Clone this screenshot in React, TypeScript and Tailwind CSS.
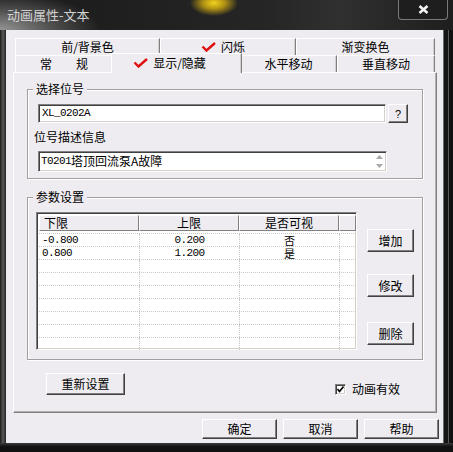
import React from 'react';

const cjk = "font-['Noto_Sans_CJK_SC',sans-serif]";
const mono = "font-['Liberation_Mono',monospace] tracking-[-0.6px]";

function RedCheck() {
  return (
    <svg width="15" height="10" viewBox="0 0 15 10" className="shrink-0">
      <path d="M1.5 4.5 L5.5 8.5 L14 1" stroke="#e00f0f" strokeWidth="2.4" fill="none" />
    </svg>
  );
}

function Btn({ children, className = '' }: { children: React.ReactNode; className?: string }) {
  return (
    <div
      className={`flex items-center justify-center bg-[#eeecf0] border border-t-white border-l-white border-r-[#404040] border-b-[#404040] shadow-[inset_-1px_-1px_0_#808080] text-[12px] leading-[14px] text-black ${cjk} ${className}`}
    >
      {children}
    </div>
  );
}

function Tab({ children, w, className = '' }: { children: React.ReactNode; w: string; className?: string }) {
  return (
    <div
      className={`${w} h-[17px] flex items-center justify-center border-t border-l border-r border-t-white border-l-white border-r-[#808080] shadow-[inset_-1px_0_0_#d0d0d0] text-[12px] leading-[14px] text-black ${cjk} ${className}`}
    >
      {children}
    </div>
  );
}

function Group({ label, className = '', children }: { label: string; className?: string; children: React.ReactNode }) {
  return (
    <div className={`relative border border-[#a0a0a0] shadow-[inset_1px_1px_0_#ffffff,1px_1px_0_#ffffff] ${className}`}>
      <div className={`absolute -top-[8px] left-[5px] px-[3px] bg-[#eeecf0] text-[12px] leading-[14px] text-black ${cjk}`}>{label}</div>
      {children}
    </div>
  );
}

const sunken =
  'border border-t-[#808080] border-l-[#808080] border-b-white border-r-white shadow-[inset_1px_1px_0_#404040,inset_-1px_-1px_0_#d4d0c8] bg-white';

const rows = [
  ['-0.800', '0.200', '否'],
  ['0.800', '1.200', '是'],
  ['', '', ''],
  ['', '', ''],
  ['', '', ''],
  ['', '', ''],
  ['', '', ''],
  ['', '', ''],
  ['', '', ''],
];

export default function App() {
  return (
    <div className="w-[453px] h-[452px] bg-[#0c0c0c] flex flex-col overflow-hidden">
      {/* title bar */}
      <div className="h-[30px] flex items-start justify-between bg-[radial-gradient(24px_13px_at_214px_3px,#f2d21c_0%,#b09214_45%,transparent_100%),radial-gradient(100px_38px_at_0px_30px,#959595_0%,#525252_50%,transparent_100%),linear-gradient(90deg,#1a1a1a,#262626_60%,#303030_75%,#1e1e1e)]">
        <div className={`pl-[7px] pt-[7px] text-[13px] leading-[16px] text-[#d2d2d2] ${cjk}`}>动画属性-文本</div>
        <div className="mr-[5px] w-[50px] h-[20px] border border-t-0 border-[#7a7a7a] rounded-b-[4px] flex items-center justify-center bg-[#1e1e1e]">
          <svg width="11" height="9" viewBox="0 0 11 9">
            <path d="M1.5 1 L9.5 8 M9.5 1 L1.5 8" stroke="#f2f2f2" strokeWidth="2.6" />
          </svg>
        </div>
      </div>

      <div className="flex">
        <div className="w-[6px] h-[413px] bg-[linear-gradient(90deg,#1a1a1a,#5a5a5a_50%,#222)]" />
        {/* dialog body */}
        <div className="w-[437px] h-[413px] bg-[#eeecf0] flex flex-col pt-[8px]">
          {/* tabs */}
          <div className="ml-[9px] flex">
            <Tab w="w-[145px]">前/背景色</Tab>
            <Tab w="w-[136px]">
              <span className="flex items-center gap-[5px] -ml-[10px]">
                <RedCheck />
                闪烁
              </span>
            </Tab>
            <Tab w="w-[139px]">渐变换色</Tab>
          </div>
          <div className="ml-[9px] flex items-start h-[17px]">
            <Tab w="w-[98px]">常　　规</Tab>
            <div
              className={`relative z-10 -mx-[2px] -mt-[2px] w-[131px] h-[20px] bg-[#eeecf0] flex items-start pt-[2px] justify-center border-t border-l border-r border-t-white border-l-white border-r-[#808080] shadow-[inset_-1px_0_0_#d0d0d0] text-[12px] leading-[14px] text-black ${cjk}`}
            >
              <span className="flex items-center gap-[5px] -ml-[14px]">
                <RedCheck />
                显示/隐藏
              </span>
            </div>
            <Tab w="w-[97px]">水平移动</Tab>
            <Tab w="w-[98px]">垂直移动</Tab>
          </div>

          {/* tab panel */}
          <div className="ml-[7px] w-[424px] h-[341px] border border-t-white border-l-white border-r-[#808080] border-b-[#808080] shadow-[inset_-1px_-1px_0_#b0b0b0] flex flex-col">
            <Group label="选择位号" className="ml-[13px] mt-[16px] w-[396px] h-[90px]">
              <div className="flex mt-[14px] ml-[10px] gap-[2px]">
                <div className={`${sunken} w-[348px] h-[19px] pl-[3px] flex items-center text-[11px] text-black ${mono}`}>XL_0202A</div>
                <Btn className="w-[20px] h-[19px] !font-['Liberation_Sans',sans-serif] !text-[11px]">?</Btn>
              </div>
              <div className={`ml-[6px] mt-[7px] text-[12px] leading-[14px] text-black ${cjk}`}>位号描述信息</div>
              <div className={`${sunken} ml-[10px] mt-[7px] w-[349px] h-[21px] flex`}>
                <div className="flex-1 pl-[2px] pt-[1px] h-[16px] flex items-center">
                  <span className={`text-[11px] leading-[14px] text-black ${mono}`}>T0201</span>
                  <span className={`text-[12px] leading-[14px] text-black ${cjk}`}>塔顶回流泵A故障</span>
                </div>
                <div className="w-[13px] flex flex-col items-center justify-between py-[3px]">
                  <svg width="7" height="4" viewBox="0 0 7 4"><path d="M0 4 L3.5 0 L7 4 Z" fill="#a8a8a8" /></svg>
                  <svg width="7" height="4" viewBox="0 0 7 4"><path d="M0 0 L3.5 4 L7 0 Z" fill="#a8a8a8" /></svg>
                </div>
              </div>
            </Group>

            <Group label="参数设置" className="ml-[13px] mt-[18px] w-[396px] h-[163px]">
              <div className="flex">
                <div className={`${sunken} ml-[8px] mt-[14px] w-[321px] h-[138px] flex flex-col pl-[2px] pt-[2px]`}>
                  <div className={`flex h-[16px] text-[12px] leading-[14px] text-black ${cjk}`}>
                    <div className="w-[100px] flex items-center pl-[4px] bg-[#eeecf0] border border-t-white border-l-white border-r-[#808080] border-b-[#808080]">下限</div>
                    <div className="w-[100px] flex items-center justify-center bg-[#eeecf0] border border-t-white border-l-white border-r-[#808080] border-b-[#808080]">上限</div>
                    <div className="w-[100px] flex items-center justify-center bg-[#eeecf0] border border-t-white border-l-white border-r-[#808080] border-b-[#808080]">是否可视</div>
                    <div className="flex-1 bg-[#eeecf0] border border-t-white border-l-white border-r-[#808080] border-b-[#808080]" />
                  </div>
                  <div className="mt-[2px] flex flex-col">
                    {rows.map((r, i) => (
                      <div key={i} className="flex h-[13px] border-t border-dotted border-[#c8c8c8]">
                        <div className={`w-[101px] pl-[3px] flex items-center text-[11px] leading-[12px] text-black ${mono} border-r border-dotted border-[#c8c8c8]`}>{r[0]}</div>
                        <div className={`w-[100px] flex items-center justify-center text-[11px] leading-[12px] text-black ${mono} border-r border-dotted border-[#c8c8c8]`}>{r[1]}</div>
                        <div className={`w-[100px] flex items-center justify-center text-[11px] leading-[12px] text-black ${cjk} border-r border-dotted border-[#c8c8c8]`}>{r[2]}</div>
                        <div className="flex-1" />
                      </div>
                    ))}
                  </div>
                </div>
                <div className="ml-[10px] flex flex-col">
                  <Btn className="mt-[31px] w-[47px] h-[23px]">增加</Btn>
                  <Btn className="mt-[22px] w-[47px] h-[23px]">修改</Btn>
                  <Btn className="mt-[25px] w-[47px] h-[23px]">删除</Btn>
                </div>
              </div>
            </Group>

            <div className="flex items-start mt-[13px]">
              <Btn className="ml-[32px] w-[79px] h-[22px]">重新设置</Btn>
              <div className="ml-[210px] mt-[9px] flex items-center gap-[6px]">
                <div className={`${sunken} w-[11px] h-[11px] flex items-center justify-center`}>
                  <svg width="7" height="7" viewBox="0 0 7 7"><path d="M0.5 3 L2.5 5.5 L6.5 0.5" stroke="#000" strokeWidth="1.6" fill="none" /></svg>
                </div>
                <span className={`text-[12px] leading-[14px] text-black ${cjk}`}>动画有效</span>
              </div>
            </div>
          </div>

          {/* bottom buttons */}
          <div className="flex mt-[6px] ml-[196px] gap-[6px]">
            <Btn className="w-[75px] h-[20px]">确定</Btn>
            <Btn className="w-[75px] h-[20px]">取消</Btn>
            <Btn className="w-[75px] h-[20px]">帮助</Btn>
          </div>
        </div>
        <div className="w-[10px] h-[413px] flex">
          <div className="w-[1px] bg-[#6a6a6a]" />
          <div className="w-[4px] bg-[#141414]" />
          <div className="w-[1px] bg-[#5a5a5a]" />
          <div className="flex-1 bg-[#111]" />
        </div>
      </div>
      <div className="flex-1 bg-[linear-gradient(#3a3a3a,#111_40%)]" />
    </div>
  );
}
